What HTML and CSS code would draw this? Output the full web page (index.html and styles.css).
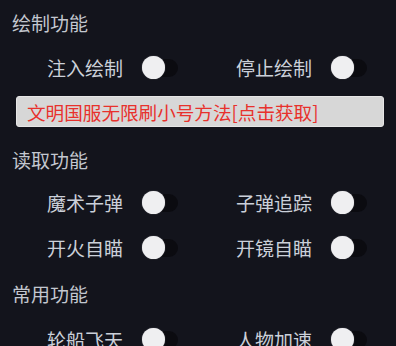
FILE: index.html
```html
<!DOCTYPE html>
<html lang="zh-CN">
<head>
<meta charset="UTF-8">
<title>功能菜单</title>
<link rel="stylesheet" href="styles.css">
</head>
<body>

<div class="menu">
  <div class="section-title first">绘制功能</div>
  <div class="row">
    <div class="item"><span class="label">注入绘制</span><span class="switch"><span class="thumb"></span></span></div>
    <div class="item"><span class="label">停止绘制</span><span class="switch"><span class="thumb"></span></span></div>
  </div>

  <div class="banner">文明国服无限刷小号方法[点击获取]</div>

  <div class="section-title">读取功能</div>
  <div class="row">
    <div class="item"><span class="label">魔术子弹</span><span class="switch"><span class="thumb"></span></span></div>
    <div class="item"><span class="label">子弹追踪</span><span class="switch"><span class="thumb"></span></span></div>
  </div>
  <div class="row">
    <div class="item"><span class="label">开火自瞄</span><span class="switch"><span class="thumb"></span></span></div>
    <div class="item"><span class="label">开镜自瞄</span><span class="switch"><span class="thumb"></span></span></div>
  </div>

  <div class="section-title last">常用功能</div>
  <div class="row">
    <div class="item"><span class="label">轮船飞天</span><span class="switch"><span class="thumb"></span></span></div>
    <div class="item"><span class="label">人物加速</span><span class="switch"><span class="thumb"></span></span></div>
  </div>
</div>

</body>
</html>
```

FILE: styles.css
```css
body {
  margin: 0;
  background-color: #13141c;
  font-family: "Noto Sans CJK SC", "Noto Sans", sans-serif;
  overflow: hidden;
}

.menu {
  width: 396px;
  height: 346px;
  overflow: hidden;
}

.section-title {
  height: 40px;
  line-height: 40px;
  padding-left: 12px;
  margin-top: 13px;
  font-size: 19px;
  color: #c3c7cf;
}

.section-title.first {
  height: 44px;
  line-height: 44px;
  margin-top: 1px;
}

.section-title.last {
  margin-top: 4px;
}

.row {
  display: grid;
  grid-template-columns: 189px auto;
  padding-left: 47px;
  height: 45px;
}

.row:last-child {
  padding-top: 3px;
}

.item {
  display: flex;
  align-items: center;
  gap: 19px;
}

.label {
  font-size: 19px;
  color: #cbd0d9;
}

/* switch: dark track with a white thumb at the left (off) */
.switch {
  width: 36px;
  height: 18px;
  border-radius: 9px;
  background-color: #0b0b10;
  display: flex;
  align-items: center;
}

.thumb {
  width: 23px;
  height: 23px;
  border-radius: 50%;
  background-color: #efeff1;
  box-shadow: 0 0 1px #9a9aa0;
}

.banner {
  margin: 6px 12px 0 16px;
  height: 29px;
  line-height: 29px;
  padding-left: 10px;
  background-color: #d7d7d7;
  border: 1px solid #e6e6e6;
  border-radius: 3px;
  color: #e8312c;
  font-size: 18.6px;
}
```
